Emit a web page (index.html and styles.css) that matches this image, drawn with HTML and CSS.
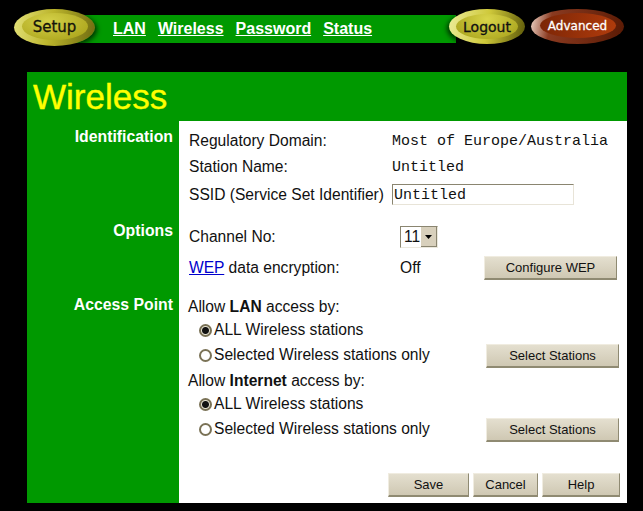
FILE: index.html
```html
<!DOCTYPE html>
<html lang="en-us">
<head>
    <meta charset="utf-8">
    <title>Wireless</title>
    <link rel="stylesheet" href="styles.css">
</head>
<body>
    <div class="top">
        <a class="pill pill-setup"><span>Setup</span></a>
        <nav class="bar">
            <a href="#">LAN</a>
            <a href="#">Wireless</a>
            <a href="#">Password</a>
            <a href="#">Status</a>
        </nav>
        <a class="pill pill-logout"><span>Logout</span></a>
        <a class="pill pill-advanced"><span>Advanced</span></a>
    </div>

    <div class="panel">
        <h1 class="title">Wireless</h1>

        <section class="section sec-ident">
            <h2 class="side">Identification</h2>
            <div class="content">
                <div class="row row-26"><span class="label">Regulatory Domain:</span><span class="mono">Most of Europe/Australia</span></div>
                <div class="row row-26"><span class="label">Station Name:</span><span class="mono">Untitled</span></div>
                <div class="row row-29"><span class="label">SSID (Service Set Identifier)</span><input class="ssid" type="text" value="Untitled"></div>
            </div>
        </section>

        <section class="section sec-options">
            <h2 class="side">Options</h2>
            <div class="content">
                <div class="row row-30">
                    <span class="label">Channel No:</span>
                    <span class="select"><span class="select-val">11</span><span class="select-arrow"><svg width="7" height="4" viewBox="0 0 7 4"><path d="M0 0h7L3.5 4z" fill="#000"/></svg></span></span>
                </div>
                <div class="row row-31">
                    <span class="label"><a class="link" href="#">WEP</a> data encryption:</span>
                    <span class="off">Off</span>
                    <button class="btn btn-wep">Configure WEP</button>
                </div>
            </div>
        </section>

        <section class="section sec-access">
            <h2 class="side">Access Point</h2>
            <div class="content">
                <div class="allow">Allow <b>LAN</b> access by:</div>
                <div class="opt opt-all"><span class="radio on"></span>ALL Wireless stations</div>
                <div class="opt opt-sel"><span class="radio"></span>Selected Wireless stations only<button class="btn btn-sel">Select Stations</button></div>
                <div class="allow">Allow <b>Internet</b> access by:</div>
                <div class="opt opt-all"><span class="radio on"></span>ALL Wireless stations</div>
                <div class="opt opt-sel"><span class="radio"></span>Selected Wireless stations only<button class="btn btn-sel">Select Stations</button></div>
                <div class="actions">
                    <button class="btn btn-save">Save</button>
                    <button class="btn btn-cancel">Cancel</button>
                    <button class="btn btn-help">Help</button>
                </div>
            </div>
        </section>
    </div>
</body>
</html>
```

FILE: styles.css
```css
body {
    margin: 0;
    background-color: #000;
    font-family: "Liberation Sans", Arial, sans-serif;
    font-size: 15.6px;
    color: #111;
    overflow: hidden;
}

/* top navigation */
.top {
    display: flex;
    align-items: flex-start;
    box-sizing: border-box;
    height: 72px;
    padding: 9px 0 0 14px;
}
.bar {
    display: flex;
    gap: 12px;
    box-sizing: border-box;
    width: 391px;
    height: 28px;
    margin: 6px 0 0 -30px;
    padding: 3px 0 0 48px;
    background-color: #009900;
}
.bar a {
    color: #fff;
    font-weight: bold;
    font-size: 16px;
    line-height: 22px;
}
.pill {
    position: relative;
    z-index: 1;
    display: flex;
    align-items: center;
    justify-content: center;
    border-radius: 50%;
    box-sizing: border-box;
    box-shadow: 2px 2px 5px rgba(0, 0, 0, 0.7);
}
.pill span {
    display: flex;
    align-items: center;
    justify-content: center;
    border-radius: 50%;
    font-family: "DejaVu Sans", Verdana, sans-serif;
    -webkit-text-stroke: 0.3px currentColor;
}
.pill-setup {
    width: 81px;
    height: 37px;
    background: linear-gradient(100deg, #e4e27a 0%, #bcb52c 45%, #6e6a10 100%);
}
.pill-setup span {
    width: 66px;
    height: 27px;
    margin-top: -2px;
    background: radial-gradient(ellipse at 40% 30%, #d4d048, #aca51c 85%);
    font-size: 15px;
    color: #14140a;
}
.pill-logout {
    width: 76px;
    height: 35px;
    margin-left: -7px;
    background: linear-gradient(100deg, #ecec9a 0%, #cfc93a 50%, #5c5808 100%);
    box-shadow: -2px 2px 5px rgba(0, 0, 0, 0.7);
}
.pill-logout span {
    width: 62px;
    height: 25px;
    background: radial-gradient(ellipse at 50% 20%, #d9d54a, #a9a31c 90%);
    font-size: 14px;
    color: #111;
}
.pill-advanced {
    width: 93px;
    height: 35px;
    margin-left: 6px;
    background: linear-gradient(100deg, #efd8cc 0%, #8a3a20 22%, #5a1a04 100%);
}
.pill-advanced span {
    width: 76px;
    height: 25px;
    margin-top: -2px;
    background: linear-gradient(100deg, #7a2506, #b23c0c);
    font-size: 12px;
    color: #fff;
}

/* main panel */
.panel {
    width: 600px;
    margin-left: 27px;
    background-color: #fff;
}
.title {
    height: 49px;
    margin: 0;
    padding-left: 6px;
    box-sizing: border-box;
    background-color: #009900;
    color: #ff0;
    font-size: 35px;
    font-weight: normal;
    line-height: 50px;
    -webkit-text-stroke: 0.4px #ff0;
}
.section {
    display: flex;
}
.side {
    width: 146px;
    margin: 0;
    padding: 0 6px 0 0;
    flex: none;
    background-color: #009900;
    color: #fff;
    font-size: 15.8px;
    font-weight: bold;
    text-align: right;
}
.content {
    flex: 1;
    padding-left: 10px;
}
.sec-ident { height: 97px; }
.sec-ident .side { padding-top: 7px; }
.sec-ident .content { padding-top: 7px; box-sizing: border-box; }
.sec-options { height: 74px; }
.sec-options .side { padding-top: 4px; }
.sec-options .content { padding-top: 4px; box-sizing: border-box; }
.sec-access { height: 211px; }
.sec-access .side { padding-top: 4px; }
.sec-access .content { padding: 3px 0 0 9px; box-sizing: border-box; }

.row {
    display: flex;
    align-items: center;
}
.row-26 { height: 26px; }
.row-29 { height: 29px; }
.row-30 { height: 30px; }
.row-31 { height: 31px; }
.label { width: 203px; flex: none; }
.mono {
    font-family: "Liberation Mono", "Courier New", monospace;
    font-size: 15px;
}
.ssid {
    box-sizing: border-box;
    width: 182px;
    height: 21px;
    padding: 2px 1px 0;
    border: 1px solid #e8e4d8;
    border-top-color: #8a8570;
    border-left-color: #8a8570;
    font-family: "Liberation Mono", "Courier New", monospace;
    font-size: 15px;
    color: #111;
    background: #fff;
}
.select {
    display: flex;
    box-sizing: border-box;
    width: 38px;
    height: 22px;
    margin-left: 8px;
    border: 1px solid #ece9de;
    border-top-color: #8a8570;
    border-left-color: #8a8570;
}
.select-val { flex: 1; padding-left: 3px; line-height: 20px; }
.select-arrow {
    display: flex;
    align-items: center;
    justify-content: center;
    width: 16px;
    background: #d8d0bc;
    border-right: 1px solid #8a8570;
    border-bottom: 1px solid #8a8570;
    box-sizing: border-box;
}
.off { width: 84px; margin-left: 8px; }
.link { color: #00c; }

.btn {
    box-sizing: border-box;
    height: 24px;
    padding: 0;
    border: 0;
    border-top: 1px solid #f0ece0;
    border-left: 1px solid #f0ece0;
    border-right: 1px solid #8f8a72;
    border-bottom: 2px solid #8f8a72;
    background: linear-gradient(#e4dfcf, #cfc8b3);
    font-family: "Liberation Sans", Arial, sans-serif;
    font-size: 13px;
    color: #111;
}
.btn-wep { width: 133px; }
.btn-sel { width: 133px; margin: 1px 8px 0 auto; }
.btn-save { width: 81px; }
.btn-cancel { width: 65px; }
.btn-help { width: 78px; }

.allow { height: 24px; line-height: 24px; }
.opt {
    display: flex;
    align-items: center;
    padding-left: 11px;
}
.opt-all { height: 22px; }
.opt-sel { height: 28px; }
.radio {
    box-sizing: border-box;
    width: 13px;
    height: 13px;
    margin-right: 2px;
    border: 2px solid #7a7256;
    border-radius: 50%;
    background: #fff;
}
.radio.on {
    background: radial-gradient(circle, #111 0 3px, #e8e4d4 4px);
}
.actions {
    display: flex;
    gap: 4px;
    margin: 30px 0 0 200px;
}
```
